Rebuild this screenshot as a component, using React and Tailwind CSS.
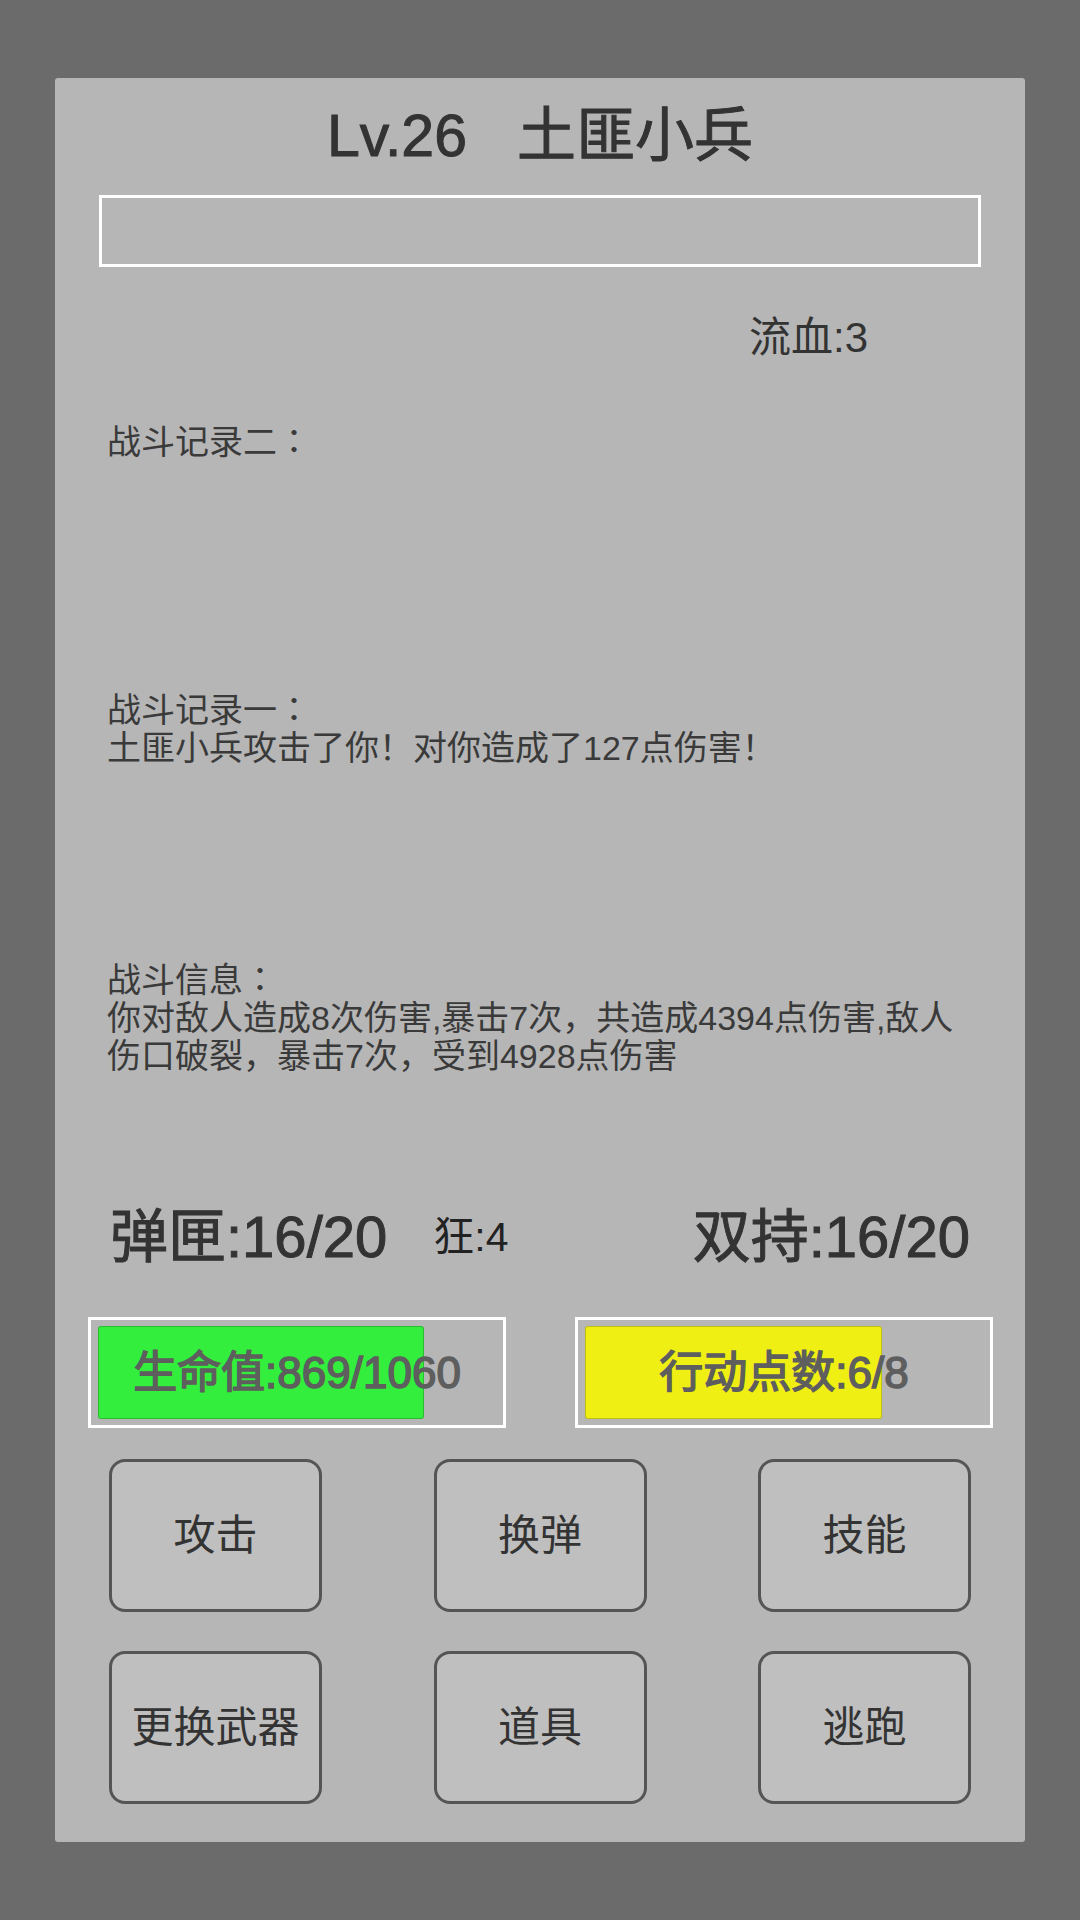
const FONT = "font-['Liberation_Sans','Noto_Sans_CJK_SC',sans-serif]";

const logs = [
  { title: "战斗记录二", lines: [] },
  { title: "战斗记录一", lines: ["土匪小兵攻击了你！对你造成了127点伤害！"] },
];

// full-width colon sits centred in its cell in the game font
const Colon = () => (
  <span className="inline-block h-[38px] leading-[38px] align-top font-['Liberation_Sans','Noto_Sans_CJK_TC',sans-serif]">
    ：
  </span>
);

function Heading({ children }) {
  return (
    <div className="h-[38px]">
      {children}
      <Colon />
    </div>
  );
}

function Bar({ label, fill, color }) {
  return (
    <div className="relative w-[418px] h-[111px] border-[3px] border-white flex items-center justify-center">
      <div
        className={`absolute left-[7px] top-[6px] h-[93px] rounded-[3px] border border-black/20 ${color}`}
        style={{ width: fill }}
      />
      <span className="relative text-[44px] text-[#5e5e5e] leading-none [-webkit-text-stroke:1.5px_#5e5e5e]">
        {label}
      </span>
    </div>
  );
}

function ActionButton({ children }) {
  return (
    <button
      type="button"
      className="w-[213px] h-[153px] rounded-[16px] border-[3px] border-[#555] bg-[#bfbfbf] text-[42px] text-[#333] leading-none flex items-center justify-center"
    >
      {children}
    </button>
  );
}

export default function App() {
  return (
    <div className={`w-[1080px] h-[1920px] bg-[#6b6b6b] pt-[78px] px-[55px] ${FONT}`}>
      <div className="w-[970px] h-[1764px] bg-[#b6b6b6] rounded-[3px] flex flex-col">
        {/* enemy name */}
        <div className="h-[117px] flex items-center justify-center text-[59px] text-[#333] leading-none [-webkit-text-stroke:1px_#333]">
          <span>Lv.26</span>
          <span className="ml-[50px]">土匪小兵</span>
        </div>

        {/* enemy hp box (empty) */}
        <div className="mx-[44px] h-[72px] border-[3px] border-white" />

        {/* status */}
        <div className="h-[134px] pt-[8px] flex items-center pl-[694px] text-[42px] text-[#333] leading-none">
          流血:3
        </div>

        {/* battle logs */}
        <div className="text-[34px] leading-[38px] text-[#3a3a3a] pl-[52px]">
          <div className="mt-[22px]">
            <Heading>{logs[0].title}</Heading>
          </div>
          <div className="mt-[230px]">
            <Heading>{logs[1].title}</Heading>
            {logs[1].lines.map((l) => (
              <div key={l}>{l}</div>
            ))}
          </div>
          <div className="mt-[194px]">
            <Heading>战斗信息</Heading>
            <div>你对敌人造成8次伤害,暴击7次，共造成4394点伤害,敌人</div>
            <div>伤口破裂，暴击7次，受到4928点伤害</div>
          </div>
        </div>

        {/* ammo */}
        <div className="mt-[122px] h-[80px] flex items-center px-[55px] text-[#333] leading-none">
          <span className="text-[58px] [-webkit-text-stroke:1px_#333]">弹匣:16/20</span>
          <span className="ml-[46px] text-[41px] text-[#222]">狂:4</span>
          <span className="ml-auto text-[58px] [-webkit-text-stroke:1px_#333]">双持:16/20</span>
        </div>

        {/* hp / ap */}
        <div className="mt-[40px] flex pl-[33px] gap-[69px]">
          <Bar label="生命值:869/1060" fill={326} color="bg-[#33ee3c]" />
          <Bar label="行动点数:6/8" fill={297} color="bg-[#f0ef14]" />
        </div>

        {/* actions */}
        <div className="mt-[31px] px-[54px] flex flex-col gap-[39px]">
          <div className="flex justify-between">
            <ActionButton>攻击</ActionButton>
            <ActionButton>换弹</ActionButton>
            <ActionButton>技能</ActionButton>
          </div>
          <div className="flex justify-between">
            <ActionButton>更换武器</ActionButton>
            <ActionButton>道具</ActionButton>
            <ActionButton>逃跑</ActionButton>
          </div>
        </div>
      </div>
    </div>
  );
}
